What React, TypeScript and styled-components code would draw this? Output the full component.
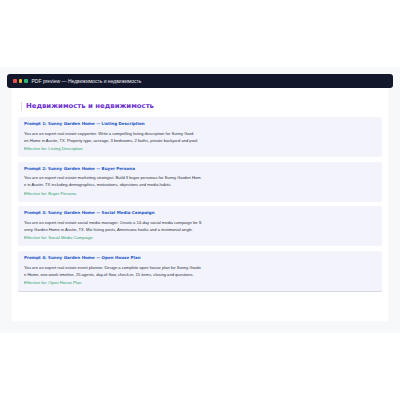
import styled, { createGlobalStyle } from "styled-components";

const prompts = [
  {
    title: "Prompt 1: Sunny Garden Home — Listing Description",
    lines: [
      "You are an expert real estate copywriter. Write a compelling listing description for Sunny Gard",
      "en Home in Austin, TX. Property type, acreage, 3 bedrooms, 2 baths, private backyard and pool.",
    ],
    note: "Effective for: Listing Description",
  },
  {
    title: "Prompt 2: Sunny Garden Home — Buyer Persona",
    lines: [
      "You are an expert real estate marketing strategist. Build 3 buyer personas for Sunny Garden Hom",
      "e in Austin, TX including demographics, motivations, objections and media habits.",
    ],
    note: "Effective for: Buyer Persona",
  },
  {
    title: "Prompt 3: Sunny Garden Home — Social Media Campaign",
    lines: [
      "You are an expert real estate social media manager. Create a 14-day social media campaign for S",
      "unny Garden Home in Austin, TX. Mix listing posts, Americana hooks and a testimonial angle.",
    ],
    note: "Effective for: Social Media Campaign",
  },
  {
    title: "Prompt 4: Sunny Garden Home — Open House Plan",
    lines: [
      "You are an expert real estate event planner. Design a complete open house plan for Sunny Garde",
      "n Home, one-week timeline, 25 agents, day-of flow, check-in, 15 items, closing and questions.",
    ],
    note: "Effective for: Open House Plan",
  },
];

const GlobalStyle = createGlobalStyle`
  html, body {
    margin: 0;
    padding: 0;
    background: #ffffff;
  }
`;

const Page = styled.div`
  width: 400px;
  height: 400px;
  padding-top: 67px;
  box-sizing: border-box;
  font-family: "Liberation Sans", Arial, sans-serif;
`;

const Backdrop = styled.div`
  height: 266px;
  padding: 7px 7px 0;
  box-sizing: border-box;
  background: #f7f8fa;
`;

const TitleBar = styled.div`
  display: flex;
  align-items: center;
  gap: 2px;
  height: 14px;
  padding-left: 6px;
  border-radius: 3px;
  background: #12172b;
  color: #e7e9f0;
  font-size: 5px;
`;

const Dot = styled.span<{ $color: string }>`
  width: 3.5px;
  height: 3.5px;
  border-radius: 1px;
  background: ${(p) => p.$color};
`;

const BarTitle = styled.span`
  margin-left: 2px;
`;

const Sheet = styled.div`
  height: 233px;
  margin: 0 5px;
  padding: 14px 6px 0;
  box-sizing: border-box;
  background: #ffffff;
`;

const Heading = styled.h1`
  margin: 0 0 6px 3px;
  padding-left: 4px;
  border-left: 1px solid #d9dbe3;
  color: #6d2fd0;
  font-family: "DejaVu Sans", sans-serif;
  font-size: 6.9px;
  line-height: 9px;
  font-weight: 700;
`;

const Card = styled.div<{ $last?: boolean }>`
  height: ${(p) => (p.$last ? 41 : 40)}px;
  margin-bottom: 4.7px;
  padding: 4px 6px 0;
  box-sizing: border-box;
  border-radius: 2px;
  background: #f2f3fb;
  border-bottom: ${(p) => (p.$last ? "1px solid #d5d7e6" : "none")};
`;

const CardTitle = styled.div`
  color: #2257c5;
  font-family: "DejaVu Sans", sans-serif;
  font-size: 4.05px;
  line-height: 6px;
  font-weight: 700;
  white-space: nowrap;
`;

const CardLine = styled.div`
  color: #2e3140;
  font-size: 4.1px;
  line-height: 7px;
  white-space: nowrap;
`;

const Body = styled.div`
  margin-top: 2.5px;
`;

const Note = styled.div`
  margin-top: 2.5px;
  color: #2ea36a;
  font-size: 4.2px;
  line-height: 6px;
  white-space: nowrap;
`;

export default function App() {
  return (
    <>
      <GlobalStyle />
      <Page>
        <Backdrop>
          <TitleBar>
            <Dot $color="#e4534d" />
            <Dot $color="#e8b52f" />
            <Dot $color="#2bb673" />
            <BarTitle>PDF preview — Недвижимость и недвижимость</BarTitle>
          </TitleBar>
          <Sheet>
            <Heading>Недвижимость и недвижимость</Heading>
            {prompts.map((p, i) => (
              <Card key={p.title} $last={i === prompts.length - 1}>
                <CardTitle>{p.title}</CardTitle>
                <Body>
                  {p.lines.map((l) => (
                    <CardLine key={l}>{l}</CardLine>
                  ))}
                </Body>
                <Note>{p.note}</Note>
              </Card>
            ))}
          </Sheet>
        </Backdrop>
      </Page>
    </>
  );
}
